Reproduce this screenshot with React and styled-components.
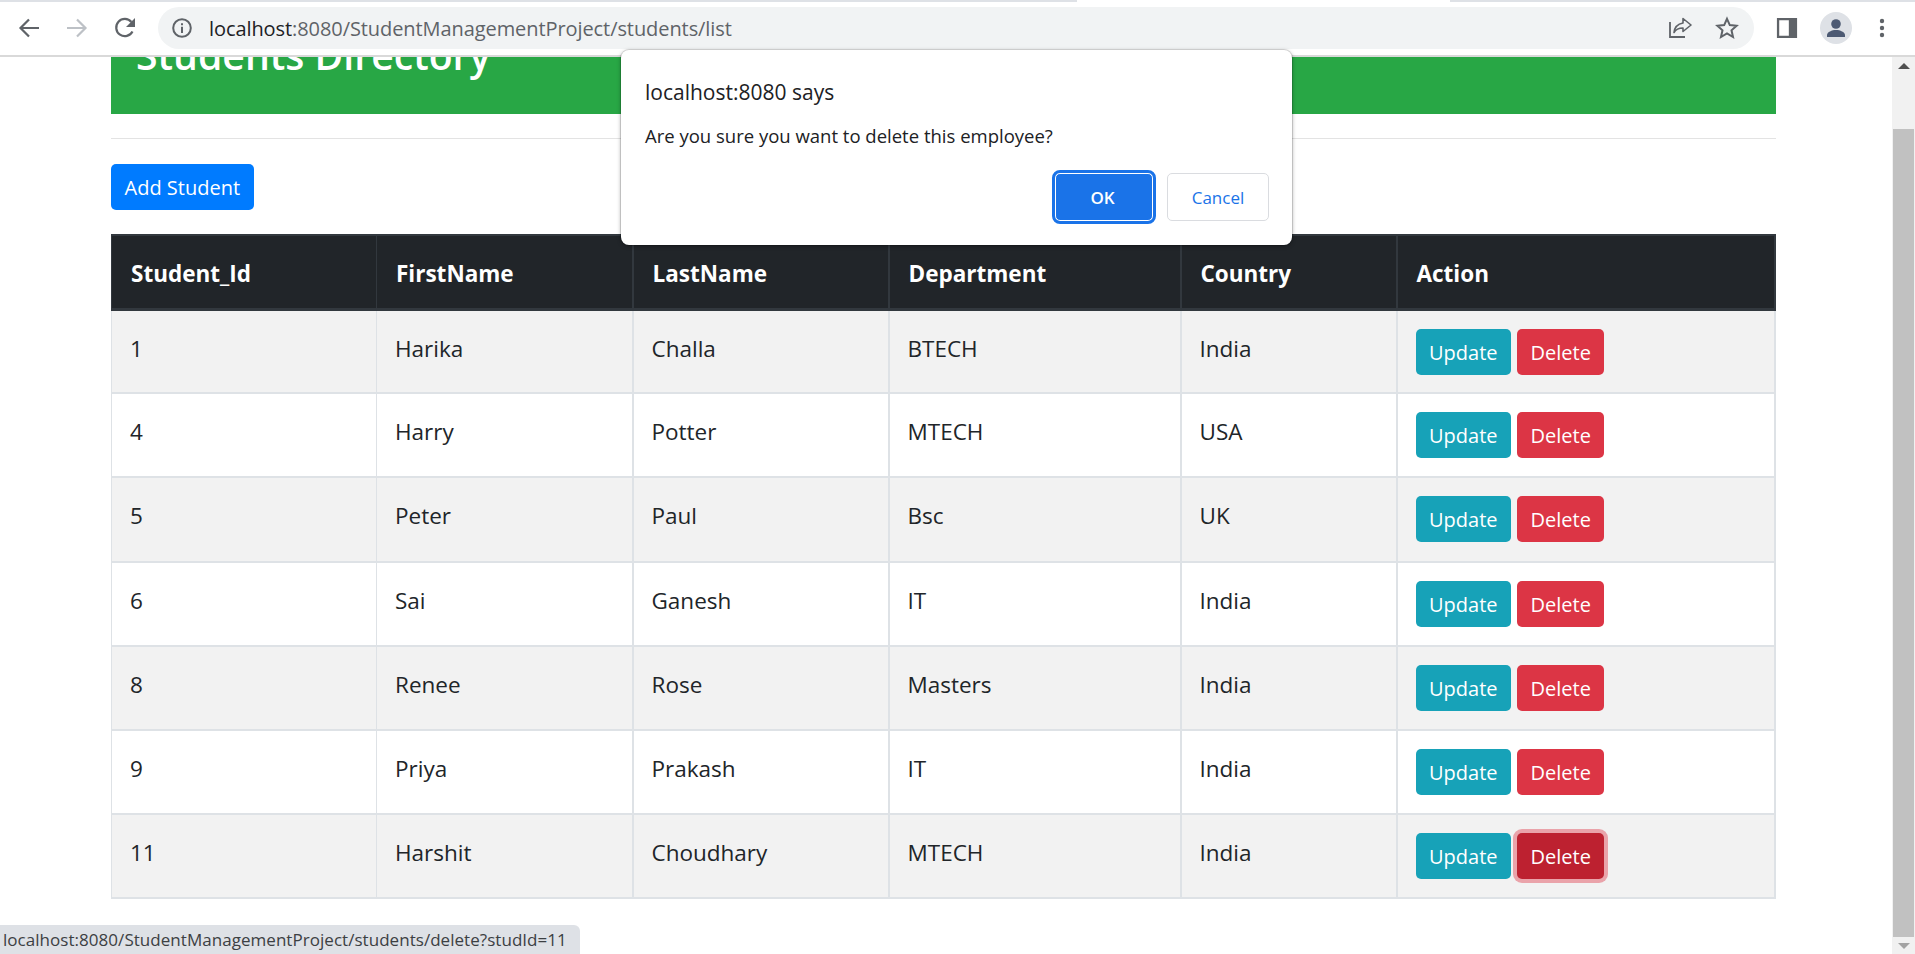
import React from "react";
import styled, { createGlobalStyle } from "styled-components";

const Global = createGlobalStyle`
  html, body { margin: 0; padding: 0; background: #fff; overflow: hidden; }
  * { box-sizing: border-box; }
  body { font-family: "Open Sans", "Noto Sans", sans-serif; color: #212529; }
`;

const Window = styled.div`
  position: relative;
  width: 1915px;
  height: 954px;
  overflow: hidden;
  display: flex;
  flex-direction: column;
`;
const TabEdge = styled.div`
  display: flex;
  height: 2px;
  flex: none;
`;
const TabEdgeLine = styled.div`
  width: ${(p) => p.$w || "auto"};
  flex: ${(p) => (p.$w ? "none" : 1)};
  background: ${(p) => (p.$gap ? "#fff" : "#dee1e6")};
`;
const Toolbar = styled.header`
  flex: none;
  height: 55px;
  display: flex;
  align-items: center;
  background: #fff;
  border-bottom: 2px solid #d9d9d9;
  padding-bottom: 1px;
  position: relative;
`;
const NavGroup = styled.div`
  display: flex;
  align-items: center;
  gap: 24px;
  padding-left: 17px;
  width: 158px;
  flex: none;
`;
const NavIcon = styled.svg`
  width: 24px;
  height: 24px;
  flex: none;
  display: block;
`;
const Omnibox = styled.div`
  width: 1596px;
  height: 42px;
  border-radius: 21px;
  background: #f1f3f4;
  display: flex;
  align-items: center;
  padding: 0 15px 0 13px;
  flex: none;
`;
const Url = styled.div`
  flex: 1;
  min-width: 0;
  margin-left: 16px;
  font-size: 20px;
  letter-spacing: -0.08px;
  color: #5f6368;
  white-space: nowrap;
`;
const UrlHost = styled.span`
  color: #202124;
`;
const OmniActions = styled.div`
  display: flex;
  align-items: center;
  gap: 23px;
`;
const ToolRight = styled.div`
  display: flex;
  align-items: center;
  margin-left: 22px;
  gap: 18px;
`;
const Avatar = styled.svg`
  width: 32px;
  height: 32px;
  display: block;
  flex: none;
  margin-left: 4px;
`;
const Body = styled.div`
  flex: 1;
  display: flex;
  min-height: 0;
`;
const Page = styled.main`
  flex: 1;
  padding: 0 116px 0 111px;
  min-width: 0;
`;
const Banner = styled.div`
  height: 57px;
  background: #28a745;
  overflow: hidden;
  display: flex;
  align-items: flex-end;
  padding: 0 0 31px 25px;
`;
const Title = styled.h1`
  margin: 0;
  color: #fff;
  font-size: 39.2px;
  line-height: 56px;
  font-weight: 600;
  white-space: nowrap;
`;
const Rule = styled.hr`
  margin: 24px 0 0;
  border: 0;
  height: 1px;
  background: #e3e3e3;
`;
const Btn = styled.a`
  display: inline-block;
  height: 46px;
  line-height: 47px;
  padding: 0 13.5px;
  font-size: 20px;
  color: #fff;
  border-radius: 5px;
  background: ${(p) => p.$bg};
  white-space: nowrap;
  ${(p) => p.$focus && `box-shadow: 0 0 0 4px rgba(225, 83, 97, 0.5);`}
`;
const AddRow = styled.div`
  margin-top: 25px;
  height: 46px;
  display: flex;
`;
const Table = styled.table`
  margin-top: 24px;
  width: 1663px;
  table-layout: fixed;
  border-collapse: collapse;
  font-size: 22.5px;
`;
const HeadCell = styled.th`
  height: 74px;
  background: #212529;
  color: #fff;
  font-weight: 700;
  text-align: left;
  border-style: solid;
  border-color: #32383e;
  border-width: 2px ${(p) => (p.$thick ? 2 : 1)}px 3px;
  padding: 5px 19px 0;
  line-height: 30px;
`;
const Row = styled.tr`
  background: ${(p) => (p.$odd ? "#f2f2f2" : "#fff")};
`;
const Cell = styled.td`
  height: 84.2px;
  border-style: solid;
  border-color: #dee2e6;
  border-width: 2px ${(p) => (p.$thick ? 2 : 1)}px;
  padding: 23px 18px 0;
  vertical-align: top;
  line-height: 30px;
`;
const ActionCell = styled(Cell)`
  padding: 18px 18px 0;
`;
const Actions = styled.div`
  display: flex;
  gap: 6px;
`;
const Scrollbar = styled.aside`
  flex: none;
  width: 23px;
  background: #f1f1f1;
  display: flex;
  flex-direction: column;
  align-items: center;
`;
const ScrollArrow = styled.div`
  height: 17px;
  flex: none;
  display: flex;
  align-items: center;
  justify-content: center;
  width: 0;
  &::before {
    content: "";
    flex: none;
    border-left: 6px solid transparent;
    border-right: 6px solid transparent;
    ${(p) => (p.$down ? "border-top: 6px solid #a3a3a3;" : "border-bottom: 6px solid #505050;")}
  }
`;
const ScrollThumbGap = styled.div`
  height: 55px;
  flex: none;
`;
const ScrollThumb = styled.div`
  flex: 1;
  width: 21px;
  background: #c1c1c1;
`;
const Dialog = styled.div`
  position: absolute;
  left: 621px;
  top: 50px;
  width: 671px;
  height: 195px;
  background: #fff;
  border-radius: 8px;
  box-shadow: 0 0 0 1px rgba(0,0,0,.12), 0 1px 4px rgba(0,0,0,.35);
  padding: 27px 23px 0 24px;
  color: #202124;
`;
const DialogTitle = styled.div`
  font-size: 21px;
  line-height: 30px;
`;
const DialogMessage = styled.div`
  margin-top: 14px;
  font-size: 18.5px;
  line-height: 30px;
`;
const DialogActions = styled.div`
  margin-top: 22px;
  display: flex;
  justify-content: flex-end;
  gap: 14px;
`;
const DialogBtn = styled.button`
  height: 48px;
  width: ${(p) => (p.$primary ? 98 : 102)}px;
  border-radius: 5px;
  font: ${(p) => (p.$primary ? 600 : 500)} 17px "Open Sans", sans-serif;
  background: ${(p) => (p.$primary ? "#1a73e8" : "#fff")};
  color: ${(p) => (p.$primary ? "#fff" : "#1a73e8")};
  border: 1px solid ${(p) => (p.$primary ? "#fff" : "#dadce0")};
  padding: 0 ${(p) => (p.$primary ? 3 : 0)}px 0 0;
  ${(p) => p.$primary && "outline: 3px solid #1a73e8; outline-offset: 0;"}
`;
const StatusBubble = styled.div`
  position: absolute;
  left: 0;
  bottom: 0;
  width: 580px;
  height: 29px;
  background: #dee1e6;
  border-top-right-radius: 6px;
  font-size: 17px;
  line-height: 29px;
  letter-spacing: 0.04px;
  padding-left: 3px;
  color: #3c4043;
  white-space: nowrap;
`;

const Back = ({ c }) => (
  <NavIcon viewBox="0 0 24 24"><path d="M22 12H4M12 3.500 3.500 12l8.500 8.500" fill="none" stroke={c} strokeWidth="2.200" /></NavIcon>
);
const Forward = ({ c }) => (
  <NavIcon viewBox="0 0 24 24"><path d="M2 12h18M12 3.500l8.500 8.500-8.500 8.500" fill="none" stroke={c} strokeWidth="2.200" /></NavIcon>
);
const Reload = () => (
  <NavIcon viewBox="0 0 24 24">
    <path d="M19.500 15.500A8.600 8.600 0 1 1 18.400 6" fill="none" stroke="#5f6368" strokeWidth="2.200" />
    <path d="M22 2v9h-9z" fill="#5f6368" />
  </NavIcon>
);
const Info = () => (
  <NavIcon viewBox="0 0 24 24" style={{ width: 22, height: 22 }}>
    <circle cx="12" cy="12" r="9.600" fill="none" stroke="#5f6368" strokeWidth="2.200" />
    <path d="M10.900 10.500h2.200v7h-2.200zM10.900 6.800h2.200v2.200h-2.200z" fill="#5f6368" />
  </NavIcon>
);
const Share = () => (
  <NavIcon viewBox="0 0 24 24">
    <path d="M2 6v15h15" fill="none" stroke="#5f6368" strokeWidth="1.800" />
    <path d="M15 2.500 23 9l-8 6.500V12c-4 0-7 1-9 4.500.5-5 3.500-8.500 9-9.500z" fill="none" stroke="#5f6368" strokeWidth="1.600" strokeLinejoin="round" />
  </NavIcon>
);
const Star = () => (
  <NavIcon viewBox="0 0 24 24">
    <path d="M12 2.800l2.800 6.300 6.800.7-5.100 4.500 1.500 6.700-6-3.500-6 3.500 1.500-6.700-5.100-4.500 6.800-.7z" fill="none" stroke="#5f6368" strokeWidth="2" strokeLinejoin="miter" />
  </NavIcon>
);
const Panel = () => (
  <NavIcon viewBox="0 0 24 24" style={{ width: 22, height: 22 }}>
    <path d="M1 1h22v22H1zM3.500 3.500v17H14v-17z" fill="#5f6368" fillRule="evenodd" />
  </NavIcon>
);
const Person = () => (
  <Avatar viewBox="0 0 32 32">
    <circle cx="16" cy="16" r="16" fill="#dee1e6" />
    <circle cx="16" cy="12" r="4.800" fill="#4d5a73" />
    <path d="M7 25v-2c0-3 5-5 9-5s9 2 9 5v2z" fill="#4d5a73" />
  </Avatar>
);
const Dots = () => (
  <NavIcon viewBox="0 0 24 24">
    <circle cx="12" cy="5" r="2.200" fill="#5f6368" />
    <circle cx="12" cy="12" r="2.200" fill="#5f6368" />
    <circle cx="12" cy="19" r="2.200" fill="#5f6368" />
  </NavIcon>
);

const colWidths = [265, 256, 256, 292, 216, 378];
const thickCols = [2, 3, 5];
const headers = ["Student_Id", "FirstName", "LastName", "Department", "Country", "Action"];
const students = [
  [1, "Harika", "Challa", "BTECH", "India"],
  [4, "Harry", "Potter", "MTECH", "USA"],
  [5, "Peter", "Paul", "Bsc", "UK"],
  [6, "Sai", "Ganesh", "IT", "India"],
  [8, "Renee", "Rose", "Masters", "India"],
  [9, "Priya", "Prakash", "IT", "India"],
  [11, "Harshit", "Choudhary", "MTECH", "India"],
];

export default function App() {
  return (
    <Window>
      <Global />
      <TabEdge>
        <TabEdgeLine $w="1077px" />
        <TabEdgeLine $w="373px" $gap />
        <TabEdgeLine />
      </TabEdge>
      <Toolbar>
        <NavGroup>
          <Back c="#5f6368" />
          <Forward c="#bdc1c6" />
          <Reload />
        </NavGroup>
        <Omnibox>
          <Info />
          <Url><UrlHost>localhost</UrlHost>:8080/StudentManagementProject/students/list</Url>
          <OmniActions>
            <Share />
            <Star />
          </OmniActions>
        </Omnibox>
        <ToolRight>
          <Panel />
          <Person />
          <Dots />
        </ToolRight>
      </Toolbar>
      <Body>
        <Page>
          <Banner><Title>Students Directory</Title></Banner>
          <Rule />
          <AddRow><Btn $bg="#007bff">Add Student</Btn></AddRow>
          <Table>
            <colgroup>
              {colWidths.map((w, i) => <col key={i} width={w} />)}
            </colgroup>
            <thead>
              <tr>{headers.map((h, i) => <HeadCell key={h} $thick={thickCols.includes(i)}>{h}</HeadCell>)}</tr>
            </thead>
            <tbody>
              {students.map((s, i) => (
                <Row key={s[0]} $odd={i % 2 === 0}>
                  {s.map((v, j) => <Cell key={v} $thick={thickCols.includes(j)}>{v}</Cell>)}
                  <ActionCell $thick>
                    <Actions>
                      <Btn $bg="#17a2b8">Update</Btn>
                      <Btn $bg={s[0] === 11 ? "#bd2130" : "#dc3545"} $focus={s[0] === 11}>Delete</Btn>
                    </Actions>
                  </ActionCell>
                </Row>
              ))}
            </tbody>
          </Table>
        </Page>
        <Scrollbar>
          <ScrollArrow />
          <ScrollThumbGap />
          <ScrollThumb />
          <ScrollArrow $down />
        </Scrollbar>
      </Body>
      <Dialog>
        <DialogTitle>localhost:8080 says</DialogTitle>
        <DialogMessage>Are you sure you want to delete this employee?</DialogMessage>
        <DialogActions>
          <DialogBtn $primary>OK</DialogBtn>
          <DialogBtn>Cancel</DialogBtn>
        </DialogActions>
      </Dialog>
      <StatusBubble>localhost:8080/StudentManagementProject/students/delete?studId=11</StatusBubble>
    </Window>
  );
}
